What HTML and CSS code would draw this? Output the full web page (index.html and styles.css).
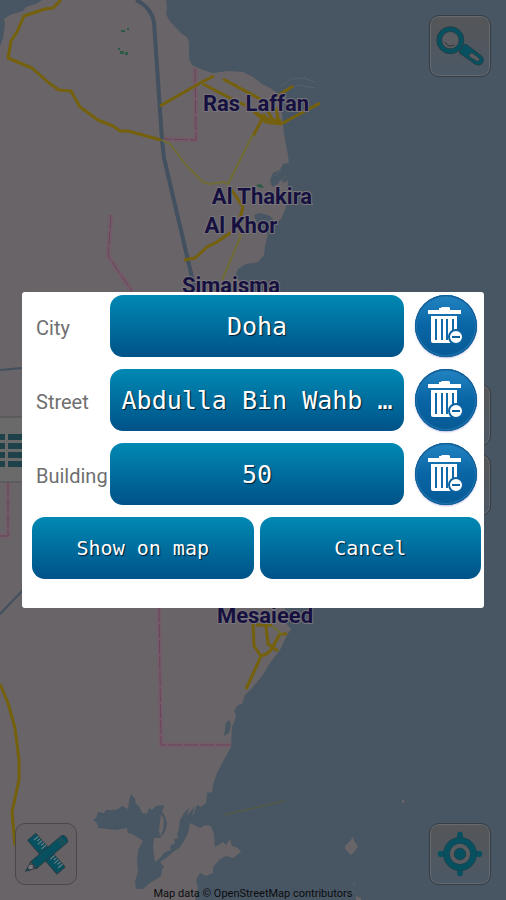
FILE: index.html
```
<!DOCTYPE html>
<html lang="en">
<head>
    <meta charset="UTF-8">
    <meta name="viewport" content="width=device-width, initial-scale=1.0">
    <title>Map of Qatar offline</title>
    <link rel="stylesheet" href="styles.css">
</head>
<body>
    <div class="app">
        <svg class="map" viewBox="0 0 506 900" preserveAspectRatio="xMidYMid slice" aria-hidden="true">
            <rect class="land" width="506" height="900"/>
            <!-- sea -->
            <path class="sea" d="M0 0H42L36 4 26 7 23 11 10 15 4 19 5 24 3 38 0 46Z"/>
            <path class="sea" d="M166 0L167 8 166 14 169 20 177 29 182 34 187 37 189 42 189 59 192 65 203 70 213 73 228 71 243 72 253 77 262 84 270 88 276 92 281 104 283 125 285 140 288 155 289 163 283 164 280 170 273 173 270 180 272 187 278 184 281 179 284 183 288 180 287 200 285 210 281 219 276 223 270 216 260 213 254 215 258 225 263 228 268 234 265 246 264 255 258 262 253 263 246 264 238 269 235 276 240 281 241 292 260 380 275 480 285 608 285 622 291 629 287 635 280 650 270 663 262 676 253 687 245 695 242 704 238 705 234 711 236 716 234 723 232 727 231 747 225 758 217 773 213 785 212 792 207 793 206 803 201 807 197 805 194 813 192 815 195 806 190 812 187 816 189 808 184 813 180 820 179 828 177 835 179 838 174 839 175 843 170 846 171 850 165 852 160 858 155 862 153 848 154 838 160 838 165 832 167 824 165 816 162 812 164 805 156 806 152 810 149 808 147 814 142 813 139 806 136 804 135 799 131 794 129 801 128 809 122 806 118 809 113 810 106 810 104 813 98 812 96 818 93 820 97 823 98 828 107 829 116 830 127 828 128 833 132 834 137 837 143 841 138 850 137 862 138 871 135 882 136 889 143 889 150 883 155 880 161 876 162 869 164 867 160 862 166 858 173 852 179 848 184 841 188 833 190 823 200 828 205 825 211 826 214 834 215 847 223 842 226 845 230 839 232 846 238 848 241 852 233 858 226 856 220 859 213 867 213 873 206 876 200 873 196 880 198 889 195 900H506V0Z"/>
            <path class="sea" d="M226 723L229 720 231 725 229 733 224 736Z"/>
            <path class="land" d="M161 814L164 820 163 830 160 836 159 830 160 822Z"/>
            <path class="land" d="M345 846L350 841 353 837 354 841 358 846 355 851 351 855 345 849ZM402 800h2v3h-2zM356 896l5 2v2h-5zM285 630l5-2 1 2-5 3z"/>
            <path class="coast" d="M279 87l12-8 13-1 11 4M283 90l15-5 17 3M275 176l6-6M279 182l7-6"/>
            <path class="coast" d="M353 886l3-4M351 889l3 3"/>
            <path class="park" d="M121 30h4v2h-4zM127 28h2v2h-2zM118 48h2v2h-2zM120 51h4v3h-4zM125 52h3v3h-3zM256 185l5-1 3 4-6-1z"/>
            <!-- boundaries -->
            <g class="border-halo">
                <path d="M195 68L196 140 163 139M111 215L108 256 132 291M159 608L161 745H231M8 482V536H0"/>
            </g>
            <g class="border-line">
                <path d="M195 68L196 140 163 139M111 215L108 256 132 291M159 608L161 745H231M8 482V536H0"/>
            </g>
            <!-- main roads -->
            <path class="motorway" d="M136 0Q151 7 154 22L162 140 164 158 195 290"/>
            <path class="motorway motorway-thin" d="M0 370L22 368M0 614L24 589"/>
            <g class="road">
                <path d="M61 0L53 8 45 9 24 16 17 32 11 41 8 58 32 68 49 83 59 90 71 91 80 107 98 120 113 126 120 131 128 131 161 140"/>
                <path d="M160 106L202 82 214 76M203 84L230 98M223 79L262 100 272 119M230 98L247 106M254 112L266 122 281 124 320 103M265 104L293 86M279 123L276 108M254 112L268 119 281 121M265 114L253 136"/>
                <path d="M231 189L243 207 240 218M184 260L195 258 207 247 217 242 233 231"/>
                <path d="M0 684L8 703 15 728 19 760 19 780 12 812 15 846"/>
                <path d="M246 689L252 676 258 663 261 656 254 646 253 622M266 626L268 644 278 651M261 656Q269 654 272 648L280 634 287 634M256 625H272"/>
            </g>
            <g class="road-minor">
                <path d="M162 140L170 144 186 165 203 182 210 184 223 182 228 184 253 134M240 218L240 238 222 280M272 626L282 634"/>
                <path class="ferry" d="M224 815L284 801"/>
            </g>
            <!-- town names -->
            <g class="town">
                <text x="256" y="111">Ras Laffan</text>
                <text x="262" y="204">Al Thakira</text>
                <text x="241" y="233">Al Khor</text>
                <text x="231" y="293">Simaisma</text>
                <text x="265" y="623">Mesaieed</text>
            </g>
            <!-- map layers panel, mostly under the dialog -->
            <path class="panel" d="M-2 417H30V482H-2Z"/>
            <path class="panel-bars" d="M0 434h5v6H0zM8 434h22v6H8zM0 443h5v6H0zM8 443h22v6H8zM0 452h5v6H0zM8 452h22v6H8zM0 461h5v6H0zM8 461h22v6H8z"/>
        </svg>

        <div class="controls controls-top">
            <button class="map-button" type="button" aria-label="Search">
                <svg viewBox="0 0 62 62">
                    <path class="tool" d="M33 31L37 29 53 41Q57 45 54 49 51 52 47 50L30 38Z"/>
                    <path class="hole" d="M41 39Q42 37 45 39L50 43Q52 45 51 46 49 48 47 46L42 43Q39 41 41 39Z"/>
                    <circle class="tool" cx="21" cy="25" r="14"/>
                    <circle class="hole" cx="21" cy="25" r="9"/>
                    <path class="glint" d="M15 27Q19 33 25 30"/>
                </svg>
            </button>
        </div>
        <div class="controls controls-zoom">
            <button class="map-button" type="button" aria-label="Zoom in"></button>
            <button class="map-button" type="button" aria-label="Zoom out"></button>
        </div>
        <div class="controls controls-bottom">
            <button class="map-button map-button-clear" type="button" aria-label="Draw and measure">
                <svg viewBox="0 0 62 62">
                    <g transform="rotate(49 31 31)">
                        <rect class="tool" x="8" y="25" width="46" height="11"/>
                        <path class="ticks" d="M12 25v6M15 25v4M18 25v6M21 25v4M24 25v6M38 25v6M41 25v4M44 25v6M47 25v4M50 25v6"/>
                    </g>
                    <g transform="rotate(-40 31 31)">
                        <path class="tool" d="M14 27H54Q58 27 58 31 58 36 54 36H14Z"/>
                        <path class="cap" d="M50 27V36M53 27V36"/>
                        <path class="nib" d="M14 27L4 31 14 36 12 33 14 31 12 29Z"/>
                        <path class="tool" d="M7 30L4 31 7 33Z"/>
                    </g>
                </svg>
            </button>
            <button class="map-button" type="button" aria-label="My location">
                <svg viewBox="0 0 62 62">
                    <path class="cross" d="M31 11V15M31 47V51M11 31H15M47 31H51"/>
                    <circle class="ring-edge" cx="31" cy="31" r="14"/>
                    <circle class="ring" cx="31" cy="31" r="14"/>
                    <circle class="tool" cx="31" cy="31" r="6"/>
                </svg>
            </button>
        </div>
        <p class="attribution">Map data © OpenStreetMap contributors</p>

        <div class="overlay">
            <form class="dialog" role="dialog" aria-label="Address search">
                <div class="row">
                    <label for="city">City</label>
                    <button class="btn btn-value" id="city" type="button">Doha</button>
                    <button class="clear" type="button" aria-label="Clear city">
                        <svg viewBox="0 0 62 62"><use href="#bin"/></svg>
                    </button>
                </div>
                <div class="row">
                    <label for="street">Street</label>
                    <button class="btn btn-value" id="street" type="button">Abdulla Bin Wahb …</button>
                    <button class="clear" type="button" aria-label="Clear street">
                        <svg viewBox="0 0 62 62"><use href="#bin"/></svg>
                    </button>
                </div>
                <div class="row">
                    <label for="building">Building</label>
                    <button class="btn btn-value" id="building" type="button">50</button>
                    <button class="clear" type="button" aria-label="Clear building">
                        <svg viewBox="0 0 62 62"><use href="#bin"/></svg>
                    </button>
                </div>
                <div class="actions">
                    <button class="btn" type="submit">Show on map</button>
                    <button class="btn" type="button">Cancel</button>
                </div>
            </form>
        </div>
    </div>

    <svg class="symbols" width="0" height="0" aria-hidden="true">
        <symbol id="bin" viewBox="0 0 62 62">
            <path fill="#fff" d="M13 15H24V13H26Q26 12 28 12H33Q35 12 35 13V15H46V19H13Z"/>
            <path fill="#fff" d="M16 21H42V47Q42 48 41 48H18Q16 48 16 46Z"/>
            <path stroke="#1069a8" stroke-width="2" d="M21 24V45M27 24V45M32 24V45M38 24V45"/>
            <circle cx="41" cy="42" r="7" fill="#fff" stroke="#0d62a0" stroke-width="2"/>
            <path stroke="#0d62a0" stroke-width="2" d="M37 42H45"/>
        </symbol>
    </svg>
</body>
</html>
```
FILE: styles.css
```
* {
    box-sizing: border-box;
}
body {
    margin: 0;
    font-family: Roboto, sans-serif;
    background-color: #485663;
}
button {
    padding: 0;
    border: none;
    cursor: pointer;
}
.app {
    position: relative;
    display: flex;
    flex-direction: column;
    min-height: 100vh;
    overflow: hidden;
}
.symbols {
    position: absolute;
}

/* map */
.map {
    position: absolute;
    inset: 0;
    width: 100%;
    height: 100%;
}
.map path {
    stroke-linejoin: round;
}
.land {
    fill: #686467;
}
.sea {
    fill: #485663;
}
.coast {
    fill: none;
    stroke: #596069;
}
.park {
    fill: #2c5a46;
}
.border-halo {
    fill: none;
    stroke: #735c69;
    stroke-width: 5;
}
.border-line {
    fill: none;
    stroke: #6b4358;
    stroke-dasharray: 14 2;
}
.motorway {
    fill: none;
    stroke: #42505f;
    stroke-width: 4;
}
.motorway-thin {
    stroke-width: 2;
}
.road {
    fill: none;
    stroke: #75610c;
    stroke-width: 3;
}
.road-minor {
    fill: none;
    stroke: #706d35;
    stroke-width: 2;
}
.ferry {
    stroke: #5b5d37;
    stroke-width: 1;
}
.town {
    font-size: 22px;
    font-weight: 700;
    text-anchor: middle;
    fill: #15103f;
    stroke: #77747a;
    stroke-width: 2px;
    paint-order: stroke;
}
.panel {
    fill: #6b6a6b;
    stroke: #515053;
}
.panel-bars {
    fill: #1e414a;
}

/* map buttons */
.controls {
    position: relative;
    display: flex;
    justify-content: space-between;
    padding: 0 15px;
}
.controls-top {
    justify-content: flex-end;
    padding-top: 15px;
}
.controls-zoom {
    flex: 1;
    flex-direction: column;
    justify-content: center;
    align-items: flex-end;
    gap: 8px;
}
.map-button {
    width: 62px;
    height: 62px;
    border: 1px solid #363d44;
    border-radius: 10px;
    background: linear-gradient(#555658, #4c5866);
    box-shadow: inset 0 0 0 1px #666b70;
}
.map-button-clear {
    border-color: #4a484b;
    background: #656165;
    box-shadow: none;
}
.map-button svg {
    display: block;
    width: 60px;
    height: 60px;
}
.tool {
    fill: #07505f;
    stroke: #253f48;
    stroke-width: 1;
}
.hole {
    fill: #595c60;
    stroke: #253f48;
}
.glint {
    fill: none;
    stroke: #2d3338;
}
.ticks {
    stroke: #81878a;
    stroke-width: 1;
}
.cap {
    stroke: #394e54;
}
.nib {
    fill: #77777a;
    stroke: #333b40;
}
.ring {
    fill: none;
    stroke: #07505f;
    stroke-width: 6;
}
.ring-edge {
    fill: #595c60;
    stroke: #253f48;
    stroke-width: 7;
}
.cross {
    stroke: #07505f;
    stroke-width: 6;
    stroke-linecap: round;
}
.attribution {
    position: relative;
    margin: 0;
    padding-top: 2px;
    font-size: 11px;
    line-height: 13px;
    text-align: center;
    color: #0c0d0f;
}

/* address dialog */
.overlay {
    position: absolute;
    inset: 0;
    display: flex;
    align-items: center;
    padding: 0 22px;
}
.dialog {
    display: flex;
    flex-direction: column;
    gap: 12px;
    width: 100%;
    padding: 3px 0 29px;
    border-radius: 3px;
    background: white;
}
.row {
    display: grid;
    grid-template-columns: 74px 1fr 62px;
    align-items: center;
    padding: 0 7px 0 14px;
}
.row label {
    font-size: 20px;
    padding-top: 4px;
    color: #6f6f6f;
}
.btn {
    height: 62px;
    border-radius: 13px;
    background: linear-gradient(#0089b3, #005288);
    color: white;
    font-family: "DejaVu Sans Mono", monospace;
    font-size: 20px;
    text-shadow: 1px 1px 1px #001c33;
}
.btn-value {
    min-width: 0;
    margin-right: 11px;
    font-size: 25px;
    white-space: nowrap;
    overflow: hidden;
}
.clear {
    width: 62px;
    height: 62px;
    border-radius: 50%;
    background: linear-gradient(#2384c2, #0965a5 50%, #075a95);
    box-shadow: inset 0 0 0 1px #0d5c96, inset 0 0 0 2px #2074ad, 0 1px 2px #b5b5e0;
}
.clear svg {
    display: block;
}
.actions {
    display: grid;
    grid-template-columns: 1fr 1fr;
    gap: 6px;
    padding: 0 3px 0 10px;
}
```
